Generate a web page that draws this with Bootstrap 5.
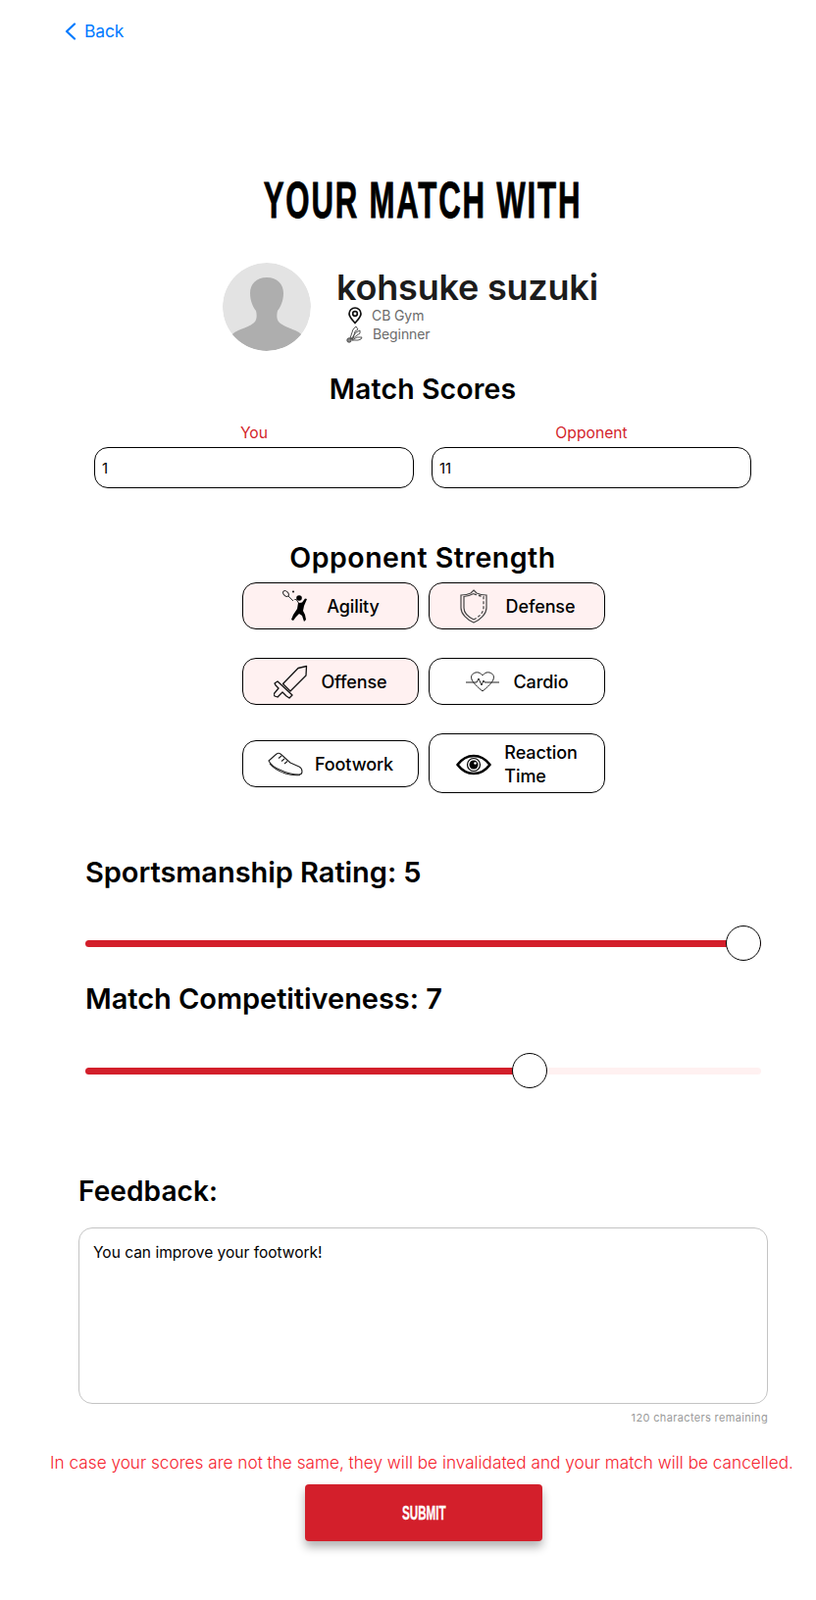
<!DOCTYPE html>
<html lang="en">
<head>
<meta charset="utf-8">
<title>Your match with</title>
<link href="https://cdn.jsdelivr.net/npm/bootstrap@5.3.0/dist/css/bootstrap.min.css" rel="stylesheet">
<style>
body{font-family:Inter,"Liberation Sans",sans-serif;color:#000;background:#fff;margin:0}
.page-wrap{width:832px;height:1632px;overflow:hidden}
.back-link{color:#007aff;font-size:17.500px;line-height:22px;padding:21px 0 0 66px;gap:8px;text-decoration:none;letter-spacing:-.2px}
.match-title{font-family:"Liberation Sans",sans-serif;font-weight:700;font-size:52px;line-height:60px;letter-spacing:3px;margin:131px 0 0 30px;text-align:center;transform:scaleX(.6);-webkit-text-stroke:.9px #000;white-space:nowrap}
.profile-row{margin-top:34px;padding-left:227px;height:90px;gap:26px}
.avatar-disc{width:90px;height:90px;border-radius:50%;flex:none}
.player-name{font-size:36px;font-weight:600;line-height:38px;color:#1c1c1c;letter-spacing:-.2px;margin:6px 0 0;white-space:nowrap}
.meta-line{font-size:14px;line-height:19px;color:#6b6b6b;padding-left:10px;gap:9px;letter-spacing:-.1px}
.meta-line svg{flex:none}
.meta-line .meta-shift{margin-left:1px}
.section-head{font-size:28.500px;line-height:34px;font-weight:600;text-align:center;margin:0 0 0 30px;letter-spacing:.1px}
.strength-title{letter-spacing:.5px}
.scores-head{margin-top:22px}
.score-grid{padding:0 64px 0 96px;gap:18px;margin-top:18px}
.score-cell{width:326px}
.score-label{color:#d31f2b;font-size:15.700px;line-height:20px;text-align:center;margin-bottom:4px}
.score-input.form-control{height:42px;border:1px solid #000;border-radius:14px;font-size:15px;padding:0 7px;color:#000;box-shadow:none}
.strength-head{margin-top:54px}
.skill-grid{display:grid;grid-template-columns:180px 180px;column-gap:10px;row-gap:29px;justify-content:center;align-items:center;margin:8px 0 0 32px}
.skill-btn.btn{width:180px;height:48px;border:1px solid #000;border-radius:14px;font-size:18px;line-height:24px;font-weight:500;color:#000;background:#fff;padding:2px 0 0;gap:12px;letter-spacing:-.1px}
.skill-btn.is-on{background:#fff1f1}
.skill-btn.is-tall{height:61px}
.skill-wide{gap:18px !important}
.skill-mid{gap:15px !important}
.skill-tight{gap:13px !important}
.rating-block{padding:0 55px 0 87px}
.rating-title{font-size:29px;line-height:36px;font-weight:600;margin:0;letter-spacing:-.05px}
.rating-first{margin-top:63px}
.rating-next{margin-top:21px}
.rate-range{-webkit-appearance:none;appearance:none;display:block;width:689px;height:36px;background:transparent;margin:37px 0 0}
.rate-near{margin-top:36px}
.rate-range::-webkit-slider-runnable-track{height:7px;border-radius:4px;background:linear-gradient(to right,#d31f2b var(--fill),#fff1f1 var(--fill))}
.rate-range::-webkit-slider-thumb{-webkit-appearance:none;width:36px;height:36px;border-radius:50%;background:#fff;border:1px solid #000;margin-top:-14.500px}
.feedback-block{padding:0 48px 0 80px;margin-top:87px}
.feedback-title{font-size:28px;line-height:36px;font-weight:600;margin:0 0 19px;letter-spacing:.1px}
.feedback-area.form-control{width:703px;height:180px;border:1px solid #c4c4c4;border-radius:14px;font-size:15.500px;line-height:22px;padding:14px;color:#000;resize:none;box-shadow:none}
.char-count{width:703px;font-size:11px;line-height:14px;color:#9a9a9a;text-align:right;margin-top:7px;letter-spacing:.35px}
.warn-line{color:#f5222d;font-size:17.200px;line-height:24px;text-align:center;margin:27px 0 0 28px;font-weight:300;white-space:nowrap}
.submit-wrap{margin:10px 0 0 32px}
.submit-btn.btn{width:242px;height:58px;background:#d31f2b;border:0;border-radius:4px;color:#fff;box-shadow:0 6px 10px rgba(0,0,0,.3);padding:0}
.submit-text{display:inline-block;font-family:"Liberation Sans",sans-serif;font-weight:700;font-size:20px;transform:scaleX(.58);-webkit-text-stroke:.3px #fff}
</style>
</head>
<body>
<div class="page-wrap d-flex flex-column">
  <a href="#" class="back-link d-flex align-items-center">
    <svg width="12" height="18" viewBox="0 0 12 18" fill="none" stroke="#007aff" stroke-width="2.200" stroke-linecap="round" stroke-linejoin="round"><path d="M10 1.500 2 9l8 7.500"/></svg>
    <span>Back</span>
  </a>
  <h1 class="match-title">YOUR MATCH WITH</h1>
  <div class="profile-row d-flex">
    <svg class="avatar-disc" viewBox="0 0 90 90"><defs><clipPath id="av"><circle cx="45" cy="45" r="45"/></clipPath></defs><circle cx="45" cy="45" r="45" fill="#e3e3e3"/><path clip-path="url(#av)" fill="#aeaeae" d="M45 15c-11 0-17 7-17 16 0 8 3 14 6 18 1 4 1 8-1 11-3 4-12 7-17 9-5 2-8 5-9 9l8 12h60l8-12c-1-4-4-7-9-9-5-2-14-5-17-9-2-3-2-7-1-11 3-4 6-10 6-18 0-9-6-16-17-16z"/></svg>
    <div>
      <p class="player-name">kohsuke suzuki</p>
      <div class="meta-line d-flex align-items-center">
        <svg class="meta-shift" width="16" height="18" viewBox="0 0 16 18" fill="none" stroke="#111" stroke-width="1.700"><path d="M8 16.500C5 13 2 10.300 2 7a6 6 0 0 1 12 0c0 3.300-3 6-6 9.500z"/><circle cx="8" cy="7" r="2.300"/></svg>
        <span>CB Gym</span>
      </div>
      <div class="meta-line d-flex align-items-center">
        <svg width="18" height="18" viewBox="0 0 18 18" fill="none" stroke="#444" stroke-width=".9"><circle cx="3" cy="15" r="2.200" fill="#888"/><path d="M4 13 7 4l3-3 2 3-3 2-2 7zM5 14l5-7 4-2 0 3-3 2-5 4zM6 15l5-3 5 0-1 2-3 1-6 0z"/></svg>
        <span>Beginner</span>
      </div>
    </div>
  </div>
  <h2 class="section-head scores-head">Match Scores</h2>
  <div class="score-grid d-flex">
    <div class="score-cell"><div class="score-label">You</div><input class="form-control score-input" type="text" value="1" aria-label="You"></div>
    <div class="score-cell"><div class="score-label">Opponent</div><input class="form-control score-input" type="text" value="11" aria-label="Opponent"></div>
  </div>
  <h2 class="section-head strength-head strength-title">Opponent Strength</h2>
  <div class="skill-grid">
    <button type="button" class="btn skill-btn is-on skill-wide d-flex align-items-center justify-content-center">
      <svg width="28" height="36" viewBox="0 0 28 36"><ellipse cx="4.500" cy="4.500" rx="2.200" ry="3.400" fill="none" stroke="#333" transform="rotate(-45 4.500 4.500)"/><path d="M7 7l5 5" stroke="#333" fill="none"/><circle cx="18" cy="9" r="2.800" fill="#000"/><path fill="#000" d="M12 11l3-1 3 4 3-.5 3-4 2 .5-3 7-1 5 2 4 1 5-2 2-2-6-3-2-3 3-3 4-2-1 2-5 4-6 1-6-2-3z"/><circle cx="12" cy="2.500" r="1" fill="#000"/></svg>
      <span>Agility</span>
    </button>
    <button type="button" class="btn skill-btn is-on skill-wide d-flex align-items-center justify-content-center">
      <svg width="30" height="36" viewBox="0 0 30 36" fill="none" stroke="#444" stroke-width="1.200"><path d="M15 1l3 3c3 1.500 7 2 10 2v13c0 6-6 12-13 15C8 31 2 25 2 19V6c3 0 7-.5 10-2z"/><path d="M15 4.500c-3 1.500-6 2.500-10 3V19c0 5 5 9.500 10 12"/><path stroke-dasharray="3 2" d="M15 31c5-2.500 10-7 10-12V7.500c-4-.5-7-1.500-10-3"/></svg>
      <span>Defense</span>
    </button>
    <button type="button" class="btn skill-btn is-on d-flex align-items-center justify-content-center">
      <svg width="36" height="36" viewBox="0 0 36 36" fill="none" stroke="#111" stroke-width="1.300" stroke-linejoin="round"><path d="M33.500 1.500 33 11 17 27 9.500 19.500 25 3.500z"/><path d="M4 17l15 14-3 3-3-2-4-4-5 5-3-1-1-2 5-6-3-3-1-2z"/></svg>
      <span>Offense</span>
    </button>
    <button type="button" class="btn skill-btn skill-mid d-flex align-items-center justify-content-center">
      <svg width="34" height="24" viewBox="0 0 34 24" fill="none" stroke="#222" stroke-width="1"><path d="M6 9C4 4 9 1 13 2c2 .5 3 2 4 3 1-1 2-2.500 4-3 4-1 9 2 7 7-1 3-6 8-11 12-5-4-10-9-11-12z"/><path d="M0 12h11l2-4 3 7 2-5 1 2h15"/></svg>
      <span>Cardio</span>
    </button>
    <button type="button" class="btn skill-btn d-flex align-items-center justify-content-center">
      <svg width="36" height="26" viewBox="0 0 36 26" fill="none" stroke="#222" stroke-width="1.100" stroke-linejoin="round"><path d="M1 9 9 2c1-1 3-1 4 0l10 9 9 4c2 1 3 3 3 5 0 2-1 3-3 3-7 0-14-2-20-5C7 16 3 13 1 9z"/><path d="M2 12c4 5 10 8 16 10 5 1.500 10 2 15 1.500M14 4l-3 2.500M17 7l-3 2.500M20 9.500 17 12"/></svg>
      <span>Footwork</span>
    </button>
    <button type="button" class="btn skill-btn is-tall skill-tight d-flex align-items-center justify-content-center text-start">
      <svg width="36" height="22" viewBox="0 0 36 22"><path fill="none" stroke="#000" stroke-width="2.600" stroke-linejoin="round" d="M1.500 11C6 5 12 2 18 2s12 3 16.500 9C30 17 24 20 18 20S6 17 1.500 11z"/><circle cx="18" cy="11" r="6.500" fill="none" stroke="#000" stroke-width="1.200"/><circle cx="18" cy="11" r="4.500" fill="#000"/><circle cx="19.500" cy="9.500" r="1.300" fill="#fff"/></svg>
      <span>Reaction<br>Time</span>
    </button>
  </div>
  <div class="rating-block">
    <h3 class="rating-title rating-first">Sportsmanship Rating: 5</h3>
    <input class="rate-range rate-near" style="--fill:100%" type="range" min="1" max="5" value="5" aria-label="Sportsmanship Rating">
    <h3 class="rating-title rating-next">Match Competitiveness: 7</h3>
    <input class="rate-range" style="--fill:66.7%" type="range" min="1" max="10" value="7" aria-label="Match Competitiveness">
  </div>
  <div class="feedback-block">
    <h3 class="feedback-title">Feedback:</h3>
    <textarea class="form-control feedback-area" aria-label="Feedback">You can improve your footwork!</textarea>
    <div class="char-count">120 characters remaining</div>
  </div>
  <p class="warn-line">In case your scores are not the same, they will be invalidated and your match will be cancelled.</p>
  <div class="submit-wrap d-flex justify-content-center">
    <button type="button" class="btn submit-btn"><span class="submit-text">SUBMIT</span></button>
  </div>
</div>
<script src="https://cdn.jsdelivr.net/npm/bootstrap@5.3.0/dist/js/bootstrap.bundle.min.js"></script>
</body>
</html>
